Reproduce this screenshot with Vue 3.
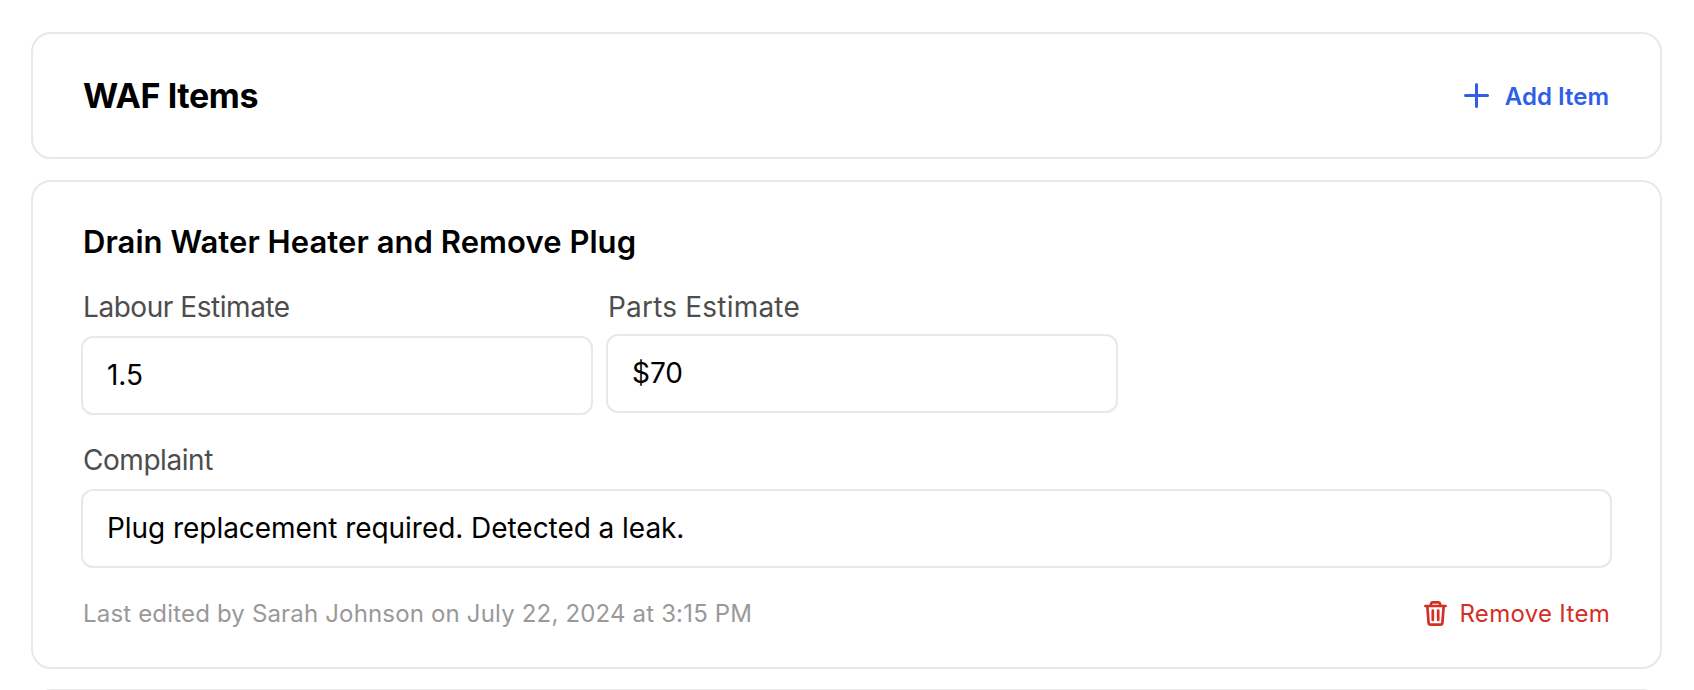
<template>
  <div class="page">
    <section class="card header">
      <h2>WAF Items</h2>
      <a class="action add">
        <svg width="25" height="25" viewBox="0 0 25 25" fill="none" stroke="currentColor" stroke-width="3" stroke-linecap="round"><path d="M12.500 1.500v22M1.500 12.500h22" /></svg>
        <span>Add Item</span>
      </a>
    </section>

    <section class="card item">
      <h3>Drain Water Heater and Remove Plug</h3>
      <div class="row">
        <div class="field labour">
          <label>Labour Estimate</label>
          <div class="input">1.5</div>
        </div>
        <div class="field parts">
          <label>Parts Estimate</label>
          <div class="input">$70</div>
        </div>
      </div>
      <div class="field complaint">
        <label>Complaint</label>
        <div class="input">Plug replacement required. Detected a leak.</div>
      </div>
      <div class="foot">
        <span class="edited">Last edited by Sarah Johnson on July 22, 2024 at 3:15 PM</span>
        <a class="action remove">
          <svg width="23" height="25" viewBox="0 0 23 25" fill="none" stroke="currentColor" stroke-width="2.7" stroke-linecap="round" stroke-linejoin="round"><path d="M1.400 5h20.200M6.500 5l.6-2.500q.3-1.100 1.600-1.100h5.600q1.300 0 1.600 1.100l.6 2.500M3.300 5l1.300 16.800q.2 1.800 2 1.800h9.800q1.800 0 2-1.800L19.700 5M8.800 9.500v9.500M14.200 9.500v9.500" /></svg>
          <span>Remove Item</span>
        </a>
      </div>
    </section>

    <section class="card next"></section>
  </div>
</template>

<script setup>
</script>

<style>
html, body { margin: 0; background: #fff; overflow: hidden; }
</style>

<style scoped>
.page {
  height: 690px;
  overflow: hidden;
  padding: 32px 32px 0 31px;
  box-sizing: border-box;
  font-family: Inter, "Liberation Sans", sans-serif;
  color: #000;
}
.card {
  background: #fff;
  border: 2px solid #e8e8e8;
  border-radius: 20px;
  box-sizing: border-box;
}
.header {
  height: 127px;
  display: flex;
  align-items: center;
  justify-content: space-between;
  padding: 0 51px 0 50px;
}
h2 { margin: 0; font-size: 34px; font-weight: 700; letter-spacing: -0.4px; }
h3 { margin: 0; padding-left: 2px; font-size: 31px; font-weight: 600; line-height: 34px; letter-spacing: 0.06px; }
.action { display: flex; align-items: center; gap: 16px; font-size: 24px; }
.add { color: #2f5fe8; font-weight: 600; }
.add span { padding-top: 2px; }
.remove { color: #d32f25; font-weight: 400; gap: 12px; letter-spacing: 0.3px; }
.item {
  margin-top: 21px;
  height: 489px;
  padding: 43px 48px 0;
}
.row { display: flex; gap: 13px; margin-top: 32px; }
.field { display: flex; flex-direction: column; }
.field label { font-size: 28px; line-height: 32px; color: #4d4d4d; padding-left: 2px; letter-spacing: -0.45px; }
.parts label { letter-spacing: 0.2px; }
.labour { width: 512px; }
.parts { width: 512px; }
.labour .input { margin-top: 13px; }
.parts .input { margin-top: 11px; }
.complaint { margin-top: 29px; }
.complaint .input { margin-top: 13px; }
.input {
  height: 79px;
  box-sizing: border-box;
  border: 2px solid #e8e8e8;
  border-radius: 12px;
  display: flex;
  align-items: center;
  padding: 0 24px 2px;
  font-size: 28px;
  letter-spacing: -0.05px;
}
.foot {
  display: flex;
  align-items: center;
  justify-content: space-between;
  margin-top: 31px;
  padding: 0 2px;
}
.edited { font-size: 24px; color: #999; letter-spacing: 0.17px; }
.next { margin-top: 20px; height: 60px; }
</style>
